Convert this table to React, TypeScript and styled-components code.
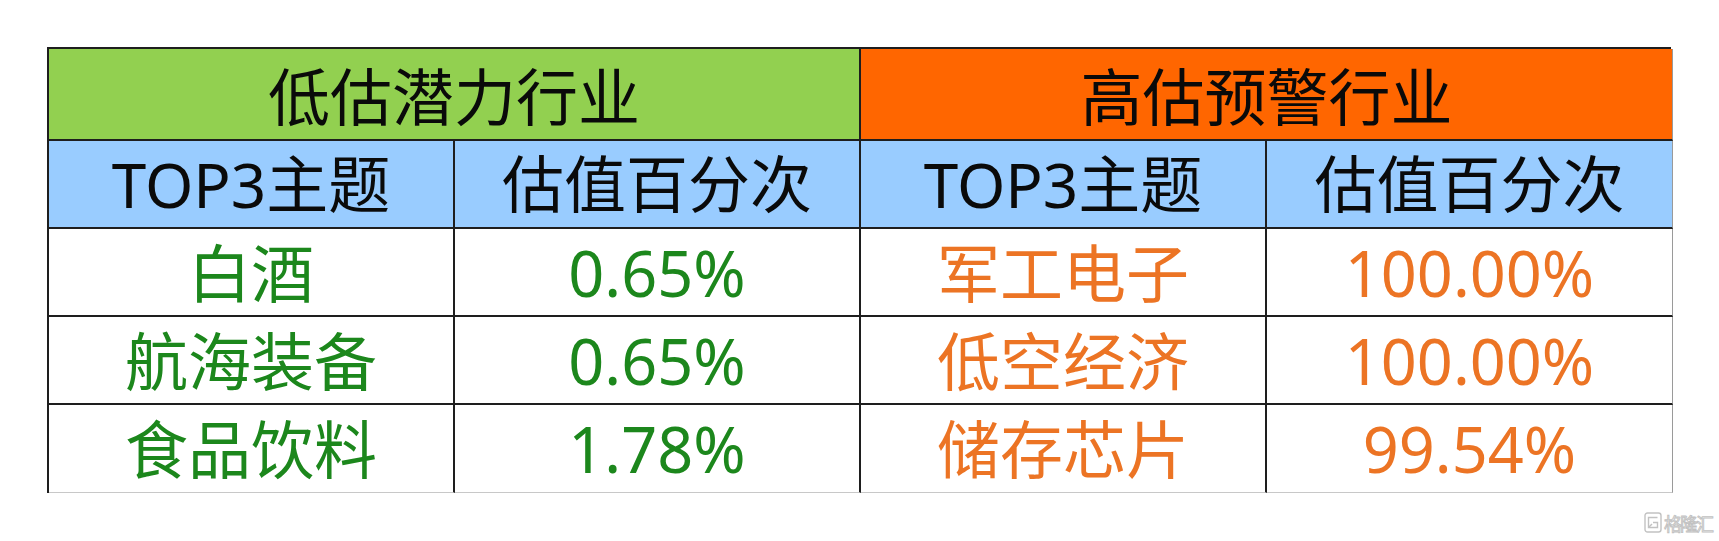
import React from "react";
import styled, { createGlobalStyle } from "styled-components";

const GlobalStyle = createGlobalStyle`
  html, body {
    margin: 0;
    padding: 0;
    background: #ffffff;
  }
  body {
    width: 1719px;
    height: 541px;
    overflow: hidden;
    font-family: "Noto Sans", "Noto Sans CJK SC", sans-serif;
  }
`;

const Page = styled.div`
  position: relative;
  width: 1719px;
  height: 541px;
  padding: 47px 0 0 47px;
  box-sizing: border-box;
`;

const Sheet = styled.div`
  display: grid;
  grid-template-columns: repeat(4, 406px);
  grid-template-rows: 92px repeat(4, 88px);
  width: 1624px;
  border-top: 2px solid #1e1e1e;
  border-left: 2px solid #1e1e1e;
  box-sizing: border-box;
`;

const Cell = styled.div<{
  $bg?: string;
  $color?: string;
  $span?: number;
  $size?: number;
  $lastCol?: boolean;
  $lastRow?: boolean;
  $drop?: number;
}>`
  grid-column: span ${(p) => p.$span ?? 1};
  display: flex;
  align-items: center;
  justify-content: center;
  box-sizing: border-box;
  background: ${(p) => p.$bg ?? "#ffffff"};
  color: ${(p) => p.$color ?? "#0a0a0a"};
  font-family: "Noto Sans", "Noto Sans CJK SC", sans-serif;
  font-size: ${(p) => p.$size ?? 63}px;
  line-height: 1;
  white-space: nowrap;
  padding-top: ${(p) => p.$drop ?? 0}px;
  border-right: ${(p) => (p.$lastCol ? "1px solid #9a9a9a" : "2px solid #1e1e1e")};
  border-bottom: ${(p) => (p.$lastRow ? "1px solid #c8c8c8" : "2px solid #1e1e1e")};
`;

const Watermark = styled.div`
  position: absolute;
  left: 1644px;
  top: 512px;
  display: flex;
  align-items: center;
  gap: 2px;
  color: #f2f2f2;
  -webkit-text-stroke: 0.9px #c2c2c2;
  font-family: "Noto Sans CJK SC", sans-serif;
  font-size: 18px;
  line-height: 1;
  letter-spacing: -2px;
`;

const GREEN = "#1c871c";
const ORANGE = "#ec7424";

type Row = { low: string; lowPct: string; high: string; highPct: string };

const rows: Row[] = [
  { low: "白酒", lowPct: "0.65%", high: "军工电子", highPct: "100.00%" },
  { low: "航海装备", lowPct: "0.65%", high: "低空经济", highPct: "100.00%" },
  { low: "食品饮料", lowPct: "1.78%", high: "储存芯片", highPct: "99.54%" },
];

export default function App() {
  return (
    <Page>
      <GlobalStyle />
      <Sheet>
        <Cell $span={2} $bg="#92d050" $size={62} $drop={6}>
          低估潜力行业
        </Cell>
        <Cell $span={2} $bg="#ff6600" $size={62} $drop={6} $lastCol>
          高估预警行业
        </Cell>

        <Cell $bg="#99ccff" $size={62}>TOP3主题</Cell>
        <Cell $bg="#99ccff" $size={62}>估值百分次</Cell>
        <Cell $bg="#99ccff" $size={62}>TOP3主题</Cell>
        <Cell $bg="#99ccff" $size={62} $lastCol>
          估值百分次
        </Cell>

        {rows.map((r, i) => {
          const last = i === rows.length - 1;
          return (
            <React.Fragment key={r.low}>
              <Cell $color={GREEN} $lastRow={last}>{r.low}</Cell>
              <Cell $color={GREEN} $lastRow={last}>{r.lowPct}</Cell>
              <Cell $color={ORANGE} $lastRow={last}>{r.high}</Cell>
              <Cell $color={ORANGE} $lastRow={last} $lastCol>
                {r.highPct}
              </Cell>
            </React.Fragment>
          );
        })}
      </Sheet>

      <Watermark>
        <svg width="18" height="21" viewBox="0 0 18 21" fill="none" stroke="#c2c2c2" strokeWidth="1.4">
          <rect x="1" y="1" width="16" height="19" rx="2.5" />
          <path d="M13.5 5.5 H4.5 V15.5 H13.5 V10.5 H9" />
          <path d="M4.5 15.5 L8 12" />
        </svg>
        <span>格隆汇</span>
      </Watermark>
    </Page>
  );
}
